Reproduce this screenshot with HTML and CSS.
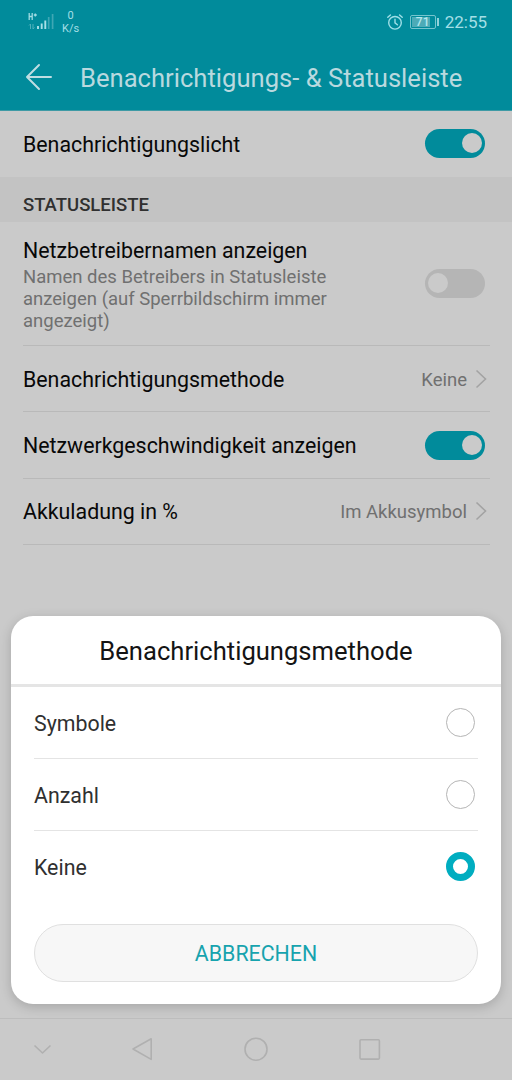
FILE: index.html
```html
<!DOCTYPE html>
<html lang="de">
<head>
  <meta charset="UTF-8" />
  <meta name="viewport" content="width=device-width, initial-scale=1.0"/>
  <title>Benachrichtigungs- &amp; Statusleiste</title>
  <link rel="stylesheet" href="styles.css">
</head>
<body>
  <div class="phone">
    <header class="header">
      <div class="status-bar">
        <div class="status-left">
          <svg class="signal" width="26" height="18" viewBox="0 0 26 18">
            <g fill="none" stroke="#9fdbe2" stroke-width="1.3">
              <path d="M1.2 1v7M4.2 1v7M1.2 4.5h3M5.8 3h3M7.3 1.5v3"/>
            </g>
            <path d="M2.5 12v5M1 13.5l1.5-1.5M5 12v5l1.5-1.5" fill="none" stroke="#4eb0bb" stroke-width="1"/>
            <path d="M10 17v-3M13.7 17v-5.5M17.3 17V8.5" stroke="#a9e0e7" stroke-width="1.9"/>
            <path d="M20.7 17V5M24.6 17V2" stroke="#3fa7b4" stroke-width="1.7"/>
          </svg>
          <div class="net-speed"><span>0</span><span>K/s</span></div>
        </div>
        <div class="status-right">
          <svg width="16" height="16" viewBox="0 0 16 16" fill="none" stroke="#9fdfe7" stroke-width="1.4" stroke-linecap="round">
            <circle cx="8" cy="8.8" r="6.3"/>
            <path d="M8 5.2v3.6l2.4 2M.8 3.3L3.4.9M15.2 3.3L12.6.9"/>
          </svg>
          <div class="battery"><span class="battery-level">71</span></div>
          <span class="clock">22:55</span>
        </div>
      </div>
      <div class="title-bar">
        <svg width="28" height="28" viewBox="0 0 28 28" fill="none" stroke="#bfdde2" stroke-width="2" stroke-linecap="round" stroke-linejoin="round">
          <path d="M26 14H2M14 2L2 14l12 12"/>
        </svg>
        <h1>Benachrichtigungs- &amp; Statusleiste</h1>
      </div>
    </header>

    <main class="settings">
      <div class="row row-first">
        <span class="label">Benachrichtigungslicht</span>
        <span class="switch on"></span>
      </div>
      <h2 class="section">STATUSLEISTE</h2>
      <div class="row row-tall">
        <div class="text">
          <span class="label">Netzbetreibernamen anzeigen</span>
          <p>Namen des Betreibers in Statusleiste<br>anzeigen (auf Sperrbildschirm immer<br>angezeigt)</p>
        </div>
        <span class="switch"></span>
      </div>
      <div class="row">
        <span class="label">Benachrichtigungsmethode</span>
        <span class="value"><span>Keine</span>
          <svg class="chevron" width="12" height="20" viewBox="0 0 12 20"><path d="M1.5 1.5l9 8.5-9 8.5"/></svg>
        </span>
      </div>
      <div class="row">
        <span class="label">Netzwerkgeschwindigkeit anzeigen</span>
        <span class="switch on"></span>
      </div>
      <div class="row">
        <span class="label">Akkuladung in %</span>
        <span class="value"><span>Im Akkusymbol</span>
          <svg class="chevron" width="12" height="20" viewBox="0 0 12 20"><path d="M1.5 1.5l9 8.5-9 8.5"/></svg>
        </span>
      </div>
    </main>

    <nav class="nav-bar">
      <svg width="114" height="60" viewBox="0 0 114 60"><path d="M34.5 25.5l8 7.5 8-7.5"/></svg>
      <svg width="114" height="60" viewBox="0 0 114 60"><path d="M37.2 18.8v20.6L19 29z"/></svg>
      <svg width="114" height="60" viewBox="0 0 114 60"><circle cx="28" cy="29.2" r="11"/></svg>
      <svg width="114" height="60" viewBox="0 0 114 60"><rect x="18" y="19.7" width="19.4" height="19.4" rx="1"/></svg>
    </nav>

    <div class="dialog">
      <h2 class="dialog-title">Benachrichtigungsmethode</h2>
      <div class="options">
        <label class="option"><span>Symbole</span><input type="radio" name="method"></label>
        <label class="option"><span>Anzahl</span><input type="radio" name="method"></label>
        <label class="option"><span>Keine</span><input type="radio" name="method" checked></label>
      </div>
      <button class="cancel">ABBRECHEN</button>
    </div>
  </div>
</body>
</html>
```
FILE: styles.css
```css
* {
  box-sizing: border-box;
}

body {
  margin: 0;
  font-family: Roboto, "Noto Sans", sans-serif;
  background: #cacaca;
}

h1, h2, p {
  margin: 0;
  font-weight: 400;
}

.phone {
  position: relative;
  display: flex;
  flex-direction: column;
  width: 512px;
  height: 1080px;
  overflow: hidden;
}

/* header */
.header {
  height: 111px;
  background: #018b9b;
  border-bottom: 1px solid #3e9aa5;
}

.status-bar {
  display: flex;
  justify-content: space-between;
  height: 44px;
  padding: 0 25px 0 28px;
  color: #a4dfe6;
}

.status-left {
  display: flex;
  align-items: center;
  gap: 8px;
}

.signal {
  margin-top: -2px;
}

.net-speed {
  display: flex;
  flex-direction: column;
  align-items: center;
  font-size: 11px;
  line-height: 13px;
}

.status-right {
  display: flex;
  align-items: center;
}

.battery {
  position: relative;
  width: 26px;
  height: 14px;
  margin: 0 9px 0 7px;
  padding: 1px;
  border: 1px solid #76c4ce;
  border-radius: 2px;
  background: linear-gradient(#4dabb7, #4dabb7) 1px 1px / 18px 10px no-repeat;
}

.battery::after {
  content: "";
  position: absolute;
  top: 2px;
  right: -4px;
  width: 2px;
  height: 8px;
  background: #8fd2da;
}

.battery-level {
  display: block;
  font-size: 12px;
  font-weight: 500;
  line-height: 11px;
  text-align: center;
  color: #b4e8ee;
}

.clock {
  font-size: 17px;
}

.title-bar {
  display: flex;
  align-items: center;
  gap: 27px;
  height: 66px;
  padding-left: 25px;
}

h1 {
  padding-top: 1px;
  font-size: 25.6px;
  color: #b9d9df;
  white-space: nowrap;
}

/* settings list */
.settings {
  flex: 1;
}

.row {
  display: flex;
  align-items: center;
  justify-content: space-between;
  height: 66.3px;
  margin: 0 22px 0 23px;
  padding-top: 2px;
  padding-right: 5px;
  border-bottom: 1px solid #b9b9b9;
}

.row-first {
  height: 66px;
  padding-top: 0;
  border-bottom: 0;
}

.row-first .label {
  padding-top: 2px;
}

.row-tall {
  height: 124px;
}

.label {
  font-size: 21.35px;
  line-height: 26px;
  color: #080808;
}

.section {
  height: 45px;
  padding: 10px 23px 0;
  background: #c3c3c3;
  color: #303030;
  font-size: 18.5px;
  font-weight: 500;
  line-height: 36px;
}

.text p {
  padding-top: 2px;
  color: #707070;
  font-size: 18.5px;
  line-height: 22px;
}

.value {
  display: flex;
  align-items: center;
  gap: 8px;
  color: #707070;
  font-size: 18.5px;
}

.chevron {
  margin: -2px -2px 0 0;
  fill: none;
  stroke: #a3a3a3;
  stroke-width: 1.6;
}

.switch {
  display: flex;
  width: 60px;
  height: 29px;
  padding: 4px 3px;
  border-radius: 15px;
  background: #b5b5b5;
}

.row-first .switch {
  margin-top: -1px;
}

.row-tall .switch {
  margin-top: -2px;
}

.switch::before {
  content: "";
  width: 20px;
  height: 20px;
  border-radius: 50%;
  background: #cacaca;
}

.switch.on {
  justify-content: flex-end;
  background: #018b9b;
}

/* navigation keys */
.nav-bar {
  display: flex;
  height: 62px;
  border-top: 1px solid #bdbdbd;
}

.nav-bar svg {
  margin-top: 1px;
  fill: none;
  stroke: #b0b0b0;
  stroke-width: 1.6;
  stroke-linejoin: round;
}

/* bottom dialog */
.dialog {
  position: absolute;
  left: 11px;
  right: 11px;
  bottom: 76px;
  height: 388px;
  border-radius: 22px;
  background: #fff;
  box-shadow: 0 3px 12px rgba(0, 0, 0, 0.18);
}

.dialog-title {
  height: 71px;
  border-bottom: 3px solid #e5e5e5;
  font-size: 25.6px;
  line-height: 71px;
  text-align: center;
  color: #141414;
}

.options {
  padding: 0 23px;
}

.option {
  display: flex;
  align-items: center;
  justify-content: space-between;
  height: 72px;
  padding-right: 3px;
  border-bottom: 1px solid #e4e4e4;
  font-size: 21.35px;
  color: #303030;
}

.option span {
  padding-top: 1px;
}

.option:last-child {
  border-bottom: 0;
}

.option input {
  appearance: none;
  width: 29px;
  height: 29px;
  margin: 0;
  border: 1px solid #b5b5b5;
  border-radius: 50%;
}

.option input:checked {
  margin-top: -1px;
  border: 7px solid #00adc0;
}

.cancel {
  display: block;
  width: 444px;
  height: 58px;
  margin: 21px auto 0;
  padding-top: 2px;
  border: 1px solid #e0e0e0;
  border-radius: 29px;
  background: #f7f7f7;
  color: #17a3ae;
  font-family: inherit;
  font-size: 21.35px;
}
```
